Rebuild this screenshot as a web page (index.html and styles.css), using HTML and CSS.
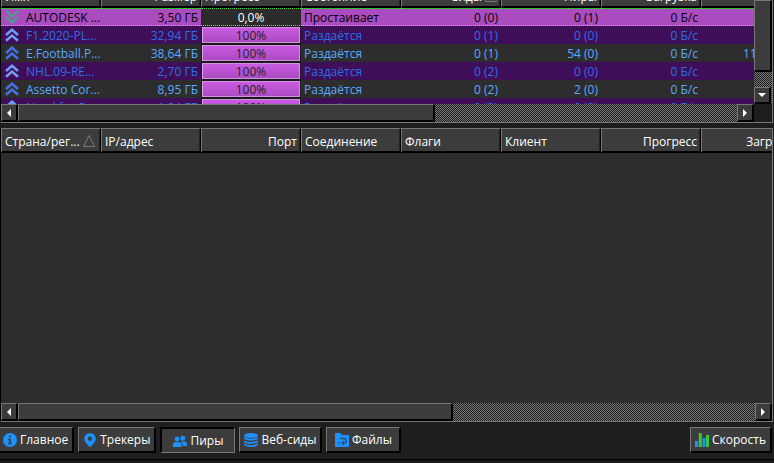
FILE: index.html
```html
<!DOCTYPE html>
<html lang="ru">
<head>
<meta charset="utf-8">
<title>Торренты</title>
<link rel="stylesheet" href="styles.css">
</head>
<body>
<svg class="defs" aria-hidden="true">
  <symbol id="chevrons-up" viewBox="0 0 14 14"><path d="M1 7 7 1.800 13 7M1 12.800 7 7.600 13 12.800" fill="none" stroke="currentColor" stroke-width="2.600"/></symbol>
  <symbol id="chevrons-down" viewBox="0 0 14 14"><path d="M1 1.200 7 6.400 13 1.200M1 7 7 12.200 13 7" fill="none" stroke="currentColor" stroke-width="2.600"/></symbol>
</svg>

<section class="pane transfers">
  <div class="port">
    <table class="list">
      <thead>
        <tr><th>Имя</th><th class="num">Размер</th><th>Прогресс</th><th>Состояние</th><th class="num sorted">Сиды <svg class="sort" viewBox="0 0 12 12"><path d="M6 .5.5 11.500h11z"/></svg></th><th class="num">Пиры</th><th class="num">Загрузка</th><th class="num">Отдача</th></tr>
      </thead>
      <tbody>
        <tr class="selected"><td class="name"><svg class="state down"><use href="#chevrons-down"/></svg>AUTODESK ...</td><td class="num">3,50 ГБ</td><td class="bar"><div>0,0%</div></td><td>Простаивает</td><td class="num">0 (0)</td><td class="num">0 (1)</td><td class="num">0 Б/с</td><td></td></tr>
        <tr class="alt"><td class="name"><svg class="state"><use href="#chevrons-up"/></svg>F1.2020-PL...</td><td class="num">32,94 ГБ</td><td class="bar"><div>100%</div></td><td>Раздаётся</td><td class="num">0 (1)</td><td class="num">0 (0)</td><td class="num">0 Б/с</td><td></td></tr>
        <tr><td class="name"><svg class="state"><use href="#chevrons-up"/></svg>E.Football.P...</td><td class="num">38,64 ГБ</td><td class="bar"><div>100%</div></td><td>Раздаётся</td><td class="num">0 (1)</td><td class="num">54 (0)</td><td class="num">0 Б/с</td><td class="num">11,8 МБ/с</td></tr>
        <tr class="alt"><td class="name"><svg class="state"><use href="#chevrons-up"/></svg>NHL.09-RE...</td><td class="num">2,70 ГБ</td><td class="bar"><div>100%</div></td><td>Раздаётся</td><td class="num">0 (2)</td><td class="num">0 (0)</td><td class="num">0 Б/с</td><td></td></tr>
        <tr><td class="name"><svg class="state"><use href="#chevrons-up"/></svg>Assetto Cor...</td><td class="num">8,95 ГБ</td><td class="bar"><div>100%</div></td><td>Раздаётся</td><td class="num">0 (2)</td><td class="num">2 (0)</td><td class="num">0 Б/с</td><td></td></tr>
        <tr class="alt"><td class="name"><svg class="state"><use href="#chevrons-up"/></svg>Need for S...</td><td class="num">1,84 ГБ</td><td class="bar"><div>100%</div></td><td>Раздаётся</td><td class="num">0 (2)</td><td class="num">0 (0)</td><td class="num">0 Б/с</td><td></td></tr>
      </tbody>
    </table>
  </div>
  <div class="scroll vertical">
    <div class="thumb"></div>
    <button class="arrow" aria-label="Вниз"><svg viewBox="0 0 8 8"><path d="M0 2h8L4 6z"/></svg></button>
  </div>
  <div class="scroll horizontal">
    <button class="arrow" aria-label="Влево"><svg viewBox="0 0 8 8"><path d="M6 0v8L2 4z"/></svg></button>
    <div class="track"><div class="thumb thumb-transfers"></div></div>
    <button class="arrow" aria-label="Вправо"><svg viewBox="0 0 8 8"><path d="M2 0v8l4-4z"/></svg></button>
  </div>
</section>

<section class="pane peers">
  <div class="port">
    <table class="list">
      <thead>
        <tr><th class="sorted">Страна/рег... <svg class="sort" viewBox="0 0 12 12"><path d="M6 .5.5 11.500h11z"/></svg></th><th>IP/адрес</th><th class="num">Порт</th><th>Соединение</th><th>Флаги</th><th>Клиент</th><th class="num">Прогресс</th><th class="num">Загрузка</th></tr>
      </thead>
    </table>
  </div>
  <div class="scroll horizontal">
    <button class="arrow" aria-label="Влево"><svg viewBox="0 0 8 8"><path d="M6 0v8L2 4z"/></svg></button>
    <div class="track"><div class="thumb thumb-peers"></div></div>
    <button class="arrow" aria-label="Вправо"><svg viewBox="0 0 8 8"><path d="M2 0v8l4-4z"/></svg></button>
  </div>
</section>

<nav class="tabs">
  <button class="tab first"><svg viewBox="0 0 14 14"><circle cx="7" cy="7" r="7"/><path class="cut" d="M6 2.500h2v2H6zM5 5.800h3v4h1v1.400H5V9.800h1V7.200H5z"/></svg>Главное</button>
  <button class="tab"><svg viewBox="0 0 14 14"><path fill-rule="evenodd" d="M7 0a5.800 5.800 0 0 0-5.800 5.800C1.200 8.600 3.800 10.800 7 14.500c3.200-3.700 5.800-5.900 5.800-8.700A5.800 5.800 0 0 0 7 0zm0 3.600a2.200 2.200 0 1 1 0 4.400 2.200 2.200 0 0 1 0-4.400z"/></svg>Трекеры</button>
  <button class="tab checked"><svg viewBox="0 0 14 14"><circle cx="9.800" cy="4.200" r="2.500"/><path d="M8 7.500h3.500c1.700 0 2.500 1.200 2.500 2.800V12H9.800c0-2-.5-3.200-1.800-4.500z"/><circle cx="4" cy="5" r="2.400"/><path d="M0 13v-1.800C0 9.200 1 8 2.600 8h3.200C7.500 8 8.700 9.200 8.700 11.200V13z"/></svg>Пиры</button>
  <button class="tab"><svg viewBox="0 0 14 14"><ellipse cx="7" cy="2.500" rx="7" ry="2.500"/><path d="M0 3.600c1 2.700 13 2.700 14 0v1.900C13 8.200 1 8.200 0 5.500zM0 6.900c1 2.700 13 2.700 14 0v1.800c-1 2.700-13 2.700-14 0zM0 10.100c1 2.700 13 2.700 14 0v1.400c-1 3.300-13 3.300-14 0z"/></svg>Веб-сиды</button>
  <button class="tab"><svg viewBox="0 0 14 14"><path d="M0 0h5.500L7 2h7v12H0z"/><path class="line" d="M5 5.500h4c3 0 3 4.500 0 4.500H7.500M8.600 8.200 6.800 10l1.800 1.800M3 10h1.500"/></svg>Файлы</button>
  <button class="tab speed"><svg viewBox="0 0 14 14"><path d="M0 8h3v6H0zM7.500 5h3v9h-3z"/><path class="green" d="M3.800 0h3v14h-3zM11 2h3v12h-3z"/></svg>Скорость</button>
</nav>
<footer class="status"></footer>
</body>
</html>
```
FILE: styles.css
```css
* { box-sizing: border-box; }

body {
  margin: 0;
  height: 100vh;
  display: flex;
  flex-direction: column;
  overflow: hidden;
  background: #1e1e1e;
  color: #fff;
  font: 12px/16px "Segoe UI", "Open Sans", "Noto Sans", sans-serif;
}

.defs { display: none; }
svg { fill: currentColor; }

.pane {
  display: grid;
  margin-right: 1px;
  border: 1px solid #000;
  border-right-color: #777;
  border-bottom-color: #777;
}

.transfers {
  flex: none;
  height: 123px;
  grid-template-columns: minmax(0, 1fr) auto;
  grid-template-rows: minmax(0, 1fr) 18px;
  border-top: 0;
}

.peers {
  flex: 1;
  min-height: 0;
  margin-top: 5px;
  grid-template-columns: minmax(0, 1fr);
  grid-template-rows: minmax(0, 1fr) 18px;
  border-top: 0;
}

.port {
  overflow: hidden;
  background: #2d2d2d;
}

/* The upper list is scrolled under the top edge of the window. */
.transfers .list { margin-top: -17px; }

.list {
  width: 800px;
  table-layout: fixed;
  border-collapse: separate;
  border-spacing: 0;
}

th, td {
  padding: 2px 3px 0;
  overflow: hidden;
  white-space: nowrap;
  text-align: left;
  font-weight: 400;
}

th {
  height: 25px;
  padding-top: 4px;
  background: #3c3c3c;
  border: 1px solid #777;
  border-right-color: #000;
  border-bottom: 2px solid #000;
  box-shadow: inset -1px 0 #222;
}

td { height: 18px; }
.num { text-align: right; }

.sort {
  width: 12px;
  height: 12px;
  vertical-align: -1px;
  fill: none;
  stroke: #777;
}

tbody tr { color: #5aaaff; }
tbody .alt { color: #2a6fe8; background: #3f0e58; }
tbody .selected { color: #000; background: #aa4cc0; }
.selected td {
  padding-top: 1px;
  border-top: 1px dotted #3fd03f;
  background: repeating-linear-gradient(90deg, #9fd070 0 1px, transparent 1px 2px) 0 100% / 100% 1px no-repeat;
}

.name { padding-left: 4px; }
.state {
  width: 14px;
  height: 14px;
  margin-right: 7px;
  vertical-align: -2px;
  color: #4571e6;
}
.alt .state { color: #709cf3; }
.state.down { color: #55978c; }

td.bar { padding: 1px 0 0; background-color: #1a1a1a; vertical-align: top; }
.bar div {
  height: 16px;
  margin: 0 1px;
  border: 1px solid #d292e0;
  border-left-color: #dba9e6;
  background: linear-gradient(#ca5be3, #aa4bc1);
  color: #222;
  line-height: 16px;
  text-align: center;
}
.selected td.bar { padding: 0; background-color: #2b2b2b; }
.selected .bar div {
  margin: 0;
  border-color: transparent;
  background: none;
  color: #fff;
}

.scroll {
  background: repeating-conic-gradient(#777 0 25%, #1e1e1e 0 50%) 0 0 / 2px 2px;
}

.vertical {
  display: flex;
  flex-direction: column;
  justify-content: space-between;
  width: 18px;
}

.horizontal {
  display: grid;
  grid-template-columns: 17px minmax(0, 1fr) 17px;
}

.thumb, .arrow {
  border: 1px solid #777;
  border-right: 2px solid #000;
  border-bottom: 2px solid #000;
  background: #3c3c3c;
}
.vertical .thumb { height: 72px; }
.track { display: flex; }
.thumb-transfers { width: 58%; }
.thumb-peers { width: 59%; }

.arrow {
  display: grid;
  place-items: center;
  width: 17px;
  height: 17px;
  padding: 0;
  color: #fff;
}
.horizontal .arrow { height: 18px; }
.arrow svg { width: 8px; height: 8px; }

.tabs {
  display: flex;
  gap: 4px;
  padding: 5px 2px 6px 0;
}

.tab {
  display: flex;
  align-items: center;
  justify-content: center;
  gap: 3px;
  min-width: 75px;
  height: 26px;
  padding: 0 4px;
  border: 1px solid #777;
  border-right: 2px solid #000;
  border-bottom: 2px solid #000;
  background: #3c3c3c;
  color: #fff;
  font: inherit;
}
.tab svg { width: 14px; height: 14px; flex: none; color: #1e90ff; overflow: visible; }
.tab.first { margin-left: -2px; }
.tab.speed { margin-left: auto; }
.tab.checked {
  border: 1px solid #777;
  border-top: 2px solid #000;
  border-left: 2px solid #000;
}
.cut { fill: #2d4a68; }
.line { fill: none; stroke: #264f7a; stroke-width: 1.4; }
.green { fill: #32cd32; }

.status {
  height: 4px;
  border-top: 1px solid #000;
  background: #1e1a1c;
}
```
